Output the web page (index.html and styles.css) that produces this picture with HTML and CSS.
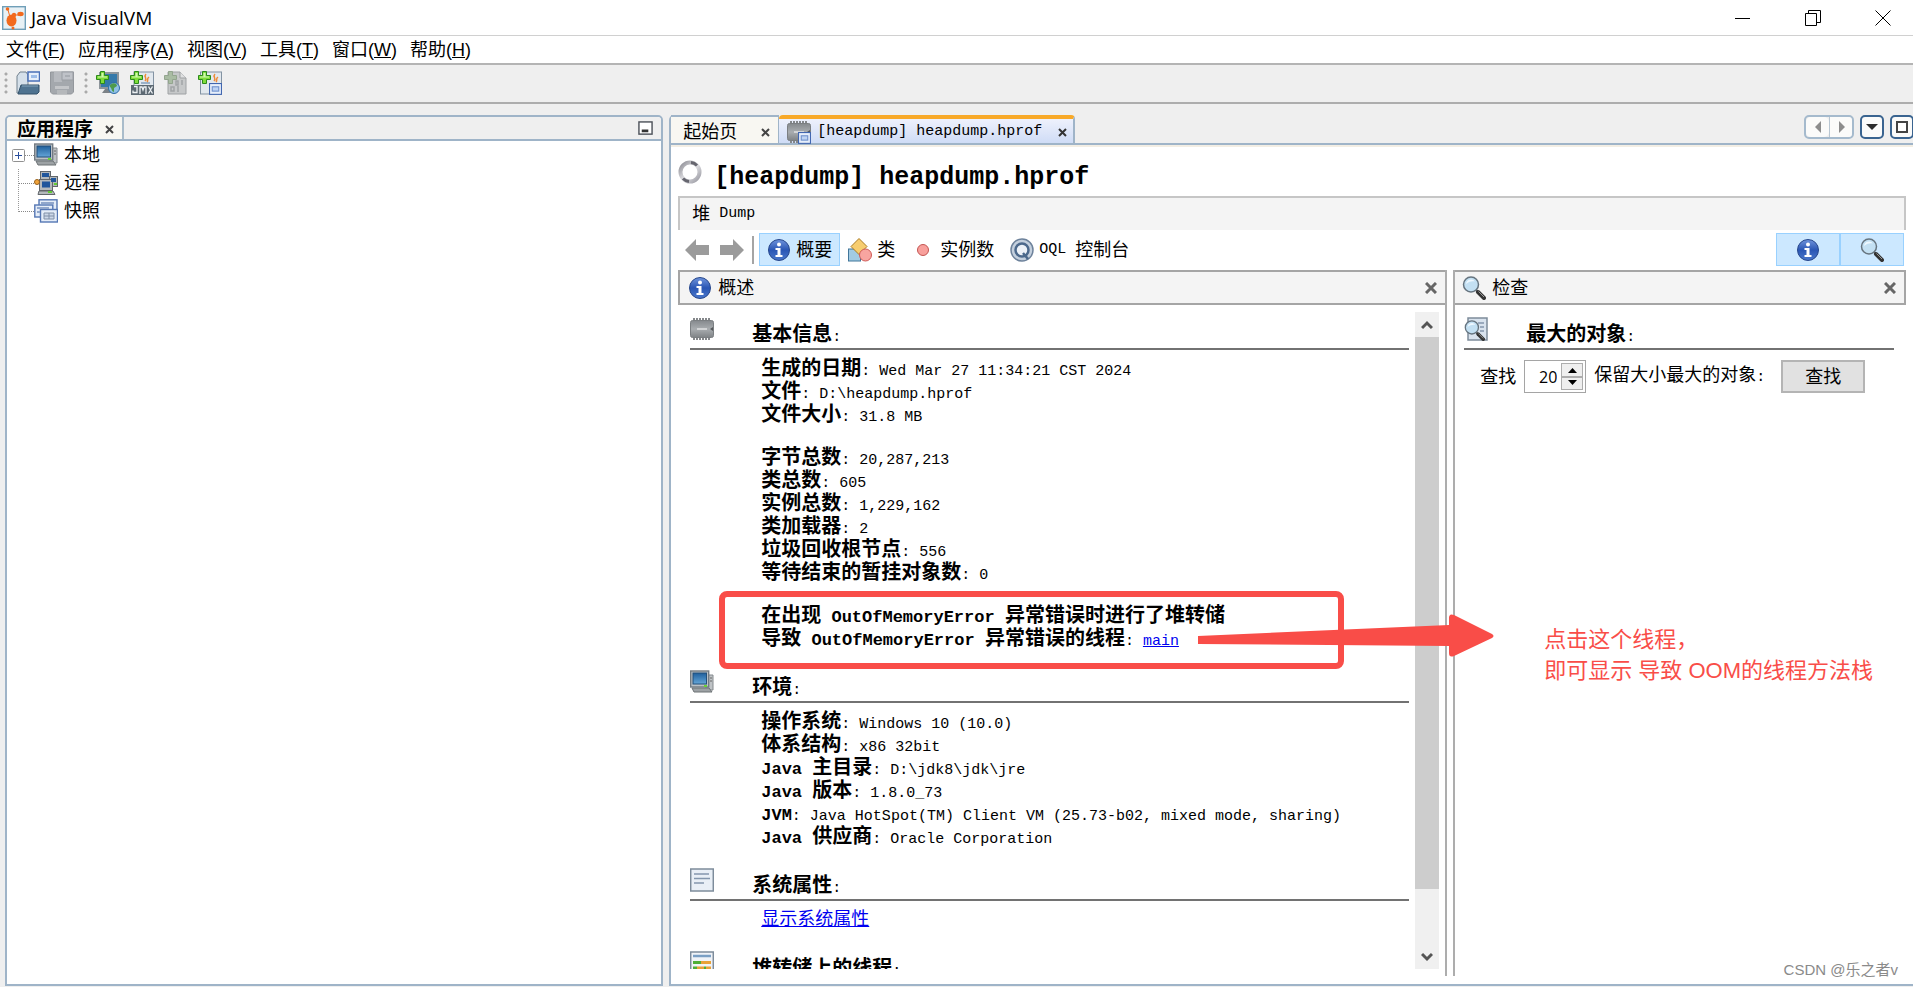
FILE: index.html
```html
<!DOCTYPE html>
<html lang="zh-CN">
<head>
<meta charset="utf-8">
<title>Java VisualVM</title>
<link rel="stylesheet" href="styles.css">
</head>
<body>
<svg class="defs" aria-hidden="true">
  <defs>
    <linearGradient id="g-info" x1="0" y1="0" x2="0" y2="1"><stop offset="0" stop-color="#6f94dc"/><stop offset=".5" stop-color="#2a56b4"/><stop offset="1" stop-color="#4a78cc"/></linearGradient>
    <linearGradient id="g-screen" x1="0" y1="0" x2="0" y2="1"><stop offset="0" stop-color="#1f5f9c"/><stop offset="1" stop-color="#65a6d8"/></linearGradient>
    <linearGradient id="g-chip" x1="0" y1="0" x2="0" y2="1"><stop offset="0" stop-color="#85898d"/><stop offset=".5" stop-color="#a9adb0"/><stop offset="1" stop-color="#7f8386"/></linearGradient>
    <linearGradient id="g-ring" x1="0" y1="0" x2="1" y2="1"><stop offset="0" stop-color="#8d8d94"/><stop offset=".5" stop-color="#e0e0e4"/><stop offset="1" stop-color="#9a9aa2"/></linearGradient>
  </defs>
  <symbol id="i-plus" viewBox="0 0 24 24"><path d="M4.500 .5h4v4h4v4h-4v4h-4v-4h-4v-4h4z" fill="#7edc3a" stroke="#2d8a1c"/><path d="M5.500 2h2v3.500h3.500v1h-9v-1h3.500z" fill="#d2f7b0"/></symbol>
  <symbol id="i-info" viewBox="0 0 24 24"><circle cx="12" cy="12" r="10.500" fill="url(#g-info)" stroke="#27478c"/><circle cx="12" cy="6.500" r="2" fill="#fff"/><path d="M8.500 10h5v7h2v2h-7v-2h2v-5h-2z" fill="#fff"/></symbol>
  <symbol id="i-mag" viewBox="0 0 24 24"><path d="M14 14l2 2" stroke="#555" stroke-width="2"/><path d="M16 16l6 6" stroke="#333" stroke-width="4" stroke-linecap="round"/><path d="M16.500 15.500l5.500 5.500" stroke="#999"/><circle cx="9" cy="8.500" r="7.500" fill="#c3e0f3" stroke="#66747f" stroke-width="1.500"/><path d="M4 8a5 5 0 0 1 9-2.500c-3-.5-6 0-9 2.500z" fill="#eef8ff"/></symbol>
  <symbol id="i-chip" viewBox="0 0 24 24"><path d="M3 2.500h18M3 21.500h18" stroke="#85888b" stroke-width="3" stroke-dasharray="2 1"/><rect x=".5" y="3.500" width="23" height="17" rx="2" fill="url(#g-chip)" stroke="#7b7f82"/><path d="M7 12h10" stroke="#e0e2e3" stroke-width="1.500"/><path d="M23 10v4l-3-2z" fill="#54585b"/></symbol>
  <symbol id="i-pc" viewBox="0 0 24 24"><path d="M16 5h7v15h-7z" fill="#bfc3c6" stroke="#858a8e"/><path d="M20 8h2M20 11h2" stroke="#666"/><path d="M2 18h17l3 4H4z" fill="#9da2a5" stroke="#6d7275"/><rect x=".7" y="1" width="18" height="16" fill="#bbc1c6" stroke="#737b82" stroke-width="1.400"/><rect x="3" y="3" width="13.500" height="11" fill="url(#g-screen)" stroke="#234f79"/><path d="M14 15h3v2h-3z" fill="#69d435"/></symbol>
  <symbol id="i-remote" viewBox="0 0 24 24"><g fill="#b4b9bc" stroke="#62676b"><rect x="6.500" y=".5" width="10" height="9"/><rect x="15.500" y="5.500" width="8" height="10"/><rect x="5.500" y="8.500" width="13" height="11"/><path d="M5 20h14l2 3.500H4z"/></g><path d="M8 2h7v4H8zM17 7h5v4h-5zM8 10.500h8v6H8z" fill="#20569c"/><path d="M14 20h4v2h-4zM20 12h3v2h-3z" fill="#62cc33"/><circle cx="3" cy="11" r="2.500" fill="#f0a33a" stroke="#99611c"/></symbol>
  <symbol id="i-snaps" viewBox="0 0 24 24"><g fill="#e5edf8" stroke="#5577b4" stroke-width="1.400"><rect x="5" y=".8" width="18" height="12"/><rect x=".8" y="6" width="18" height="12"/><rect x="6.500" y="10.500" width="17" height="12.500"/></g><path d="M7 4h13M3 9h12M3 13h3" stroke="#91a7cc" stroke-width="2"/><path d="M10 14h10v6H10zM15 14v6M10 17h10" fill="#cdd8e8" stroke="#8090a8"/></symbol>
  <symbol id="i-snap" viewBox="0 0 24 24"><rect x="1" y="1" width="22" height="20" fill="#e7effb" stroke="#4267b0" stroke-width="2"/><rect x="6" y="7" width="12" height="8" fill="#bed3f3" stroke="#6d8fcc" stroke-width="2"/></symbol>
  <symbol id="i-page" viewBox="0 0 24 24"><rect x=".7" y="1" width="22.600" height="22" fill="#e9eff6" stroke="#7d8c9b" stroke-width="1.500"/><path d="M4 6h15M4 10.500h16M4 15h10" stroke="#8496ad" stroke-width="1.500"/></symbol>
  <symbol id="i-threads" viewBox="0 0 24 24"><rect x=".7" y="1" width="22.600" height="22" fill="#f0f3f7" stroke="#7d8c9b" stroke-width="1.500"/><path d="M3 5h18" stroke="#7a9fc4" stroke-width="2.500"/><path d="M3 11.500h8M3 17h4M14 17h2" stroke="#4fae37" stroke-width="3"/><path d="M11 11.500h10M7 17h7M16 17h5" stroke="#e9a237" stroke-width="3"/></symbol>
</svg>

<header class="titlebar">
  <svg class="app-icon" viewBox="0 0 24 24"><rect x=".7" y=".7" width="22.600" height="22.600" fill="#e8f1f5" stroke="#6f9fb8" stroke-width="1.400"/><ellipse cx="9.500" cy="14.500" rx="5" ry="6" fill="#f26a1e"/><circle cx="12" cy="9" r="2.200" fill="#f26a1e"/><ellipse cx="18.500" cy="8" rx="3.200" ry="2.200" fill="#f26a1e"/><circle cx="5.500" cy="3" r="1.800" fill="#f26a1e"/><path d="M12 9h6M6 4l2 7" stroke="#f26a1e"/><circle cx="11" cy="22" r="1.500" fill="#f26a1e"/></svg>
  <h1 class="app-name">Java VisualVM</h1>
  <div class="win-controls">
    <button type="button" aria-label="最小化"><svg viewBox="0 0 16 16"><path d="M0 8.500h15" stroke="#000"/></svg></button>
    <button type="button" aria-label="还原"><svg viewBox="0 0 16 16"><path d="M.5 3.500h11v12H.5zM3.500 3V.5h12v12H12" fill="none" stroke="#000"/></svg></button>
    <button type="button" aria-label="关闭"><svg viewBox="0 0 16 16"><path d="M.5.5l15 15M15.500.5l-15 15" stroke="#000"/></svg></button>
  </div>
</header>

<nav class="menubar">
  <button type="button">文件(<u>F</u>)</button>
  <button type="button">应用程序(<u>A</u>)</button>
  <button type="button">视图(<u>V</u>)</button>
  <button type="button">工具(<u>T</u>)</button>
  <button type="button">窗口(<u>W</u>)</button>
  <button type="button">帮助(<u>H</u>)</button>
</nav>

<div class="toolbar">
  <span class="grip"></span>
  <button type="button" aria-label="装入"><svg viewBox="0 0 24 24"><path d="M1 22V5l3-4h6l2 3v18z" fill="#d5e0ea" stroke="#71808d"/><rect x="12" y="1" width="11.500" height="9" fill="#e7effb" stroke="#4a70b8" stroke-width="1.500"/><rect x="15" y="4" width="6" height="3" fill="#9dbce8"/><path d="M5 14h18v7l-2 2H2z" fill="#4f7390" stroke="#35536b"/><path d="M6 15h16" stroke="#86a5bc"/></svg></button>
  <button type="button" aria-label="另存为" disabled><svg viewBox="0 0 24 24"><path d="M.5 1h23v20l-2 2h-19l-2-2z" fill="#a4a8ad" stroke="#93979c"/><path d="M4 1h8v10H4z" fill="#b7babf"/><rect x="12" y="1" width="11" height="8" fill="#bfc2c8" stroke="#9a9ea4"/><path d="M15 4h5v2h-5z" fill="#a9adb3"/><path d="M5 15h14v3H5z" fill="#c4c6c9"/><path d="M7 19h10v4H7z" fill="#b5b8bb"/></svg></button>
  <span class="grip"></span>
  <button type="button" aria-label="添加远程主机"><svg viewBox="0 0 24 24"><rect x="4" y="2" width="18" height="15" fill="#3479aa" stroke="#8d959b" stroke-width="2"/><path d="M9 18h7l1 4H6z" fill="#7c8287"/><circle cx="18" cy="17" r="5.500" fill="#8fc0e4" stroke="#2d6ca8"/><path d="M14 14c3-3 7-2 7 1l-3 2v4c-3-1-2-4-4-5z" fill="#4e9a4c"/><use href="#i-plus" width="24" height="24"/></svg></button>
  <button type="button" aria-label="添加 JMX 连接"><svg viewBox="0 0 24 24"><rect x="4" y="1" width="19.500" height="22" fill="#e2e8ee" stroke="#8393a3"/><path d="M16 3c-3 3 2 4-1 7M19 6c-3 2 0 3-2 5" fill="none" stroke="#ee8b38" stroke-width="1.500"/><path d="M11 12h9" stroke="#557ba6"/><path d="M1 14h23v10H1z" fill="#5d6973"/><path d="M4 15.500h3v6H3v-2M10 23v-7h2l1 3 1-3h2v7M18.500 15.500l4 7M22.500 15.500l-4 7" fill="none" stroke="#eef2f5" stroke-width="1.300"/><use href="#i-plus" width="24" height="24"/></svg></button>
  <button type="button" aria-label="添加核心 Dump" disabled><svg viewBox="0 0 24 24"><path d="M4 1h12l6 6v16H4z" fill="#c6c8c9" stroke="#9fa2a4"/><path d="M16 1v6h6" fill="#dfe0e1" stroke="#9fa2a4"/><path d="M12 10h2v4h-2zM18 9v5M7 16h3v4H7zM14 15v6" fill="none" stroke="#a1a4a6" stroke-width="1.500"/><path d="M4.500 .5h4v4h4v4h-4v4h-4v-4h-4v-4h4z" fill="#a9bca3" stroke="#93a58e"/></svg></button>
  <button type="button" aria-label="添加快照"><svg viewBox="0 0 24 24"><rect x="2.500" y="1" width="21" height="22" fill="#e2e8ee" stroke="#8393a3"/><path d="M17 3c-3 3 2 4-1 7M20 6c-3 2 0 3-2 5" fill="none" stroke="#ee8b38" stroke-width="1.500"/><use href="#i-snap" x="11" y="12" width="13" height="13"/><use href="#i-plus" width="24" height="24"/></svg></button>
</div>

<main class="workspace">
  <section class="dock">
    <div class="dock-tabs">
      <div class="dock-tab"><h2>应用程序</h2><button class="tab-x" type="button" aria-label="关闭"><svg viewBox="0 0 9 9"><path d="M1 1l7 7M8 1L1 8" stroke="#444" stroke-width="2"/></svg></button></div>
      <button class="dock-min" type="button" aria-label="最小化窗口"><svg viewBox="0 0 16 16"><rect x="1" y="1" width="14" height="13" fill="#fff" stroke="#4b5058" stroke-width="1.500"/><path d="M4 10.500h7" stroke="#333" stroke-width="3"/></svg></button>
    </div>
    <ul class="tree">
      <li><button class="expander" type="button" aria-label="展开"><svg viewBox="0 0 13 13"><rect x=".5" y=".5" width="12" height="12" rx="1" fill="#fff" stroke="#919191"/><path d="M3 6.500h7M6.500 3v7" stroke="#2b4f9e"/></svg></button><span class="branch"></span><svg class="ico"><use href="#i-pc"/></svg><span>本地</span></li>
      <li><span class="stem"></span><span class="branch"></span><svg class="ico"><use href="#i-remote"/></svg><span>远程</span></li>
      <li><span class="stem last"></span><span class="branch"></span><svg class="ico"><use href="#i-snaps"/></svg><span>快照</span></li>
    </ul>
  </section>

  <section class="editor">
    <div class="tabs">
      <div class="tab"><span>起始页</span><button class="tab-x" type="button" aria-label="关闭"><svg viewBox="0 0 9 9"><path d="M1 1l7 7M8 1L1 8" stroke="#444" stroke-width="2"/></svg></button></div>
      <div class="tab active"><svg class="ico" viewBox="0 0 24 24"><use href="#i-chip" width="24" height="24"/><use href="#i-snap" x="11" y="12" width="13" height="13"/></svg><span class="mono">[heapdump] heapdump.hprof</span><button class="tab-x" type="button" aria-label="关闭"><svg viewBox="0 0 9 9"><path d="M1 1l7 7M8 1L1 8" stroke="#333" stroke-width="2"/></svg></button></div>
      <div class="tab-tools">
        <div class="pair"><button type="button" aria-label="向左滚动"><svg viewBox="0 0 14 14"><path d="M10 1v12L4 7z" fill="#8d8d8d"/></svg></button><button type="button" aria-label="向右滚动"><svg viewBox="0 0 14 14"><path d="M5 1v12l6-6z" fill="#8d8d8d"/></svg></button></div>
        <button class="strong" type="button" aria-label="显示打开的文档列表"><svg viewBox="0 0 14 14"><path d="M1 4h12L7 10z" fill="#2c2c2c"/></svg></button>
        <button class="strong" type="button" aria-label="最大化窗口"><svg viewBox="0 0 14 14"><rect x="2" y="2" width="10" height="10" fill="#fff" stroke="#444" stroke-width="2"/></svg></button>
      </div>
    </div>

    <div class="doc">
      <div class="doc-head">
        <svg class="ico" viewBox="0 0 24 24"><circle cx="12" cy="12" r="9.500" fill="none" stroke="url(#g-ring)" stroke-width="4"/><path d="M13 2.500a9.500 9.500 0 0 1 6 3M11 21.500a9.500 9.500 0 0 1-6-3" fill="none" stroke="#66666f" stroke-width="3"/></svg>
        <h2>[heapdump] heapdump.hprof</h2>
      </div>
      <div class="subbar">堆<span class="mono">Dump</span></div>
      <div class="viewbar">
        <button class="nav" type="button" aria-label="后退"><svg class="ico" viewBox="0 0 24 24"><path d="M0 12L11 1v6h13v10H11v6z" fill="#9b9b9b"/></svg></button>
        <button class="nav" type="button" aria-label="前进"><svg class="ico" viewBox="0 0 24 24"><path d="M24 12L13 1v6H0v10h13v6z" fill="#9b9b9b"/></svg></button>
        <span class="sep"></span>
        <button class="view on" type="button"><svg class="ico"><use href="#i-info"/></svg>概要</button>
        <button class="view" type="button"><svg class="ico" viewBox="0 0 24 24"><rect x=".5" y="11" width="12" height="12" fill="#a2cbe3" stroke="#41769a"/><path d="M11 .5l8 8-8 8-8-8z" fill="#f7cd6f" stroke="#a97b22"/><circle cx="17.500" cy="17" r="6" fill="#f8a5a0" stroke="#cf5a56"/></svg>类</button>
        <button class="view" type="button"><svg class="ico" viewBox="0 0 24 24"><circle cx="12" cy="12" r="5.500" fill="#f8a09c" stroke="#c35451"/></svg>实例数</button>
        <button class="view" type="button"><svg class="ico" viewBox="0 0 24 24"><circle cx="12" cy="12" r="11" fill="#c4d0de" stroke="#6d829b" stroke-width="1.500"/><circle cx="12" cy="12" r="6.500" fill="#edf2f8" stroke="#4c698c" stroke-width="2.500"/><path d="M13 15l5 6" stroke="#4c698c" stroke-width="2.500"/></svg><span class="mono">OQL</span><span class="after">控制台</span></button>
        <div class="toggles">
          <button type="button" aria-label="显示概述"><svg class="ico"><use href="#i-info"/></svg></button>
          <button type="button" aria-label="显示检查"><svg class="ico"><use href="#i-mag"/></svg></button>
        </div>
      </div>

      <div class="panes">
        <section class="pane overview">
          <div class="pane-head"><svg class="ico"><use href="#i-info"/></svg><h3>概述</h3><button type="button" aria-label="关闭"><svg viewBox="0 0 12 12"><path d="M1 1l10 10M11 1L1 11" stroke="#666" stroke-width="3"/></svg></button></div>
          <div class="scroller">
            <div class="content">
              <section class="block">
                <div class="block-head"><svg class="ico"><use href="#i-chip"/></svg><h4>基本信息<i>:</i></h4></div>
                <div class="rows">
                  <p><b>生成的日期</b>: Wed Mar 27 11:34:21 CST 2024</p>
                  <p><b>文件</b>: D:\heapdump.hprof</p>
                  <p><b>文件大小</b>: 31.8 MB</p>
                  <p class="blank"></p>
                  <p><b>字节总数</b>: 20,287,213</p>
                  <p><b>类总数</b>: 605</p>
                  <p><b>实例总数</b>: 1,229,162</p>
                  <p><b>类加载器</b>: 2</p>
                  <p><b>垃圾回收根节点</b>: 556</p>
                  <p><b>等待结束的暂挂对象数</b>: 0</p>
                  <p class="blank"></p>
                  <p><b>在出现<em> OutOfMemoryError </em>异常错误时进行了堆转储</b></p>
                  <p><b>导致<em> OutOfMemoryError </em>异常错误的线程</b>: <a href="#main">main</a></p>
                </div>
              </section>
              <section class="block">
                <div class="block-head"><svg class="ico"><use href="#i-pc"/></svg><h4>环境<i>:</i></h4></div>
                <div class="rows">
                  <p><b>操作系统</b>: Windows 10 (10.0)</p>
                  <p><b>体系结构</b>: x86 32bit</p>
                  <p><b><em>Java </em>主目录</b>: D:\jdk8\jdk\jre</p>
                  <p><b><em>Java </em>版本</b>: 1.8.0_73</p>
                  <p><b><em>JVM</em></b>: Java HotSpot(TM) Client VM (25.73-b02, mixed mode, sharing)</p>
                  <p><b><em>Java </em>供应商</b>: Oracle Corporation</p>
                </div>
              </section>
              <section class="block">
                <div class="block-head"><svg class="ico"><use href="#i-page"/></svg><h4>系统属性<i>:</i></h4></div>
                <div class="rows"><p><a class="cjk" href="#props">显示系统属性</a></p></div>
              </section>
              <section class="block">
                <div class="block-head"><svg class="ico"><use href="#i-threads"/></svg><h4>堆转储上的线程<i>:</i></h4></div>
              </section>
            </div>
            <div class="scrollbar">
              <button type="button" aria-label="向上"><svg viewBox="0 0 12 12"><path d="M1 9l5-5 5 5" fill="none" stroke="#555" stroke-width="3"/></svg></button>
              <div class="track"><div class="thumb"></div></div>
              <button type="button" aria-label="向下"><svg viewBox="0 0 12 12"><path d="M1 3l5 5 5-5" fill="none" stroke="#555" stroke-width="3"/></svg></button>
            </div>
          </div>
        </section>

        <section class="pane inspect">
          <div class="pane-head"><svg class="ico"><use href="#i-mag"/></svg><h3>检查</h3><button type="button" aria-label="关闭"><svg viewBox="0 0 12 12"><path d="M1 1l10 10M11 1L1 11" stroke="#666" stroke-width="3"/></svg></button></div>
          <div class="content">
            <section class="block">
              <div class="block-head"><svg class="ico" viewBox="0 0 24 24"><path d="M4 1h19v22H4z" fill="#d9e3ee" stroke="#7d8c9b" stroke-width="1.500"/><path d="M14 6h6M16 10h4M16 14h4" stroke="#8496ad" stroke-width="1.500"/><use href="#i-mag" x="0" y="3" width="21" height="21"/></svg><h4>最大的对象<i>:</i></h4></div>
              <form class="find">
                <label for="count">查找</label>
                <span class="spinner"><input id="count" type="text" value="20"><span class="steps"><button type="button" aria-label="增加"><svg viewBox="0 0 9 6"><path d="M0 6l4.500-5L9 6z"/></svg></button><button type="button" aria-label="减少"><svg viewBox="0 0 9 6"><path d="M0 0l4.500 5L9 0z"/></svg></button></span></span>
                <label for="count">保留大小最大的对象<i>:</i></label>
                <button class="go" type="button">查找</button>
              </form>
            </section>
          </div>
        </section>

        <div class="mark-box"></div>
        <svg class="mark-arrow" viewBox="0 0 296 44"><path d="M0 22L251 11V4q0-5 5-3l38 19q3 2 0 4l-38 18q-5 2-5-3v-7L0 30z" fill="#f94d48"/></svg>
        <p class="mark-text">点击这个线程，<br>即可显示 导致 OOM的线程方法栈</p>
      </div>
    </div>
  </section>
</main>
<div class="watermark">CSDN @乐之者v</div>
</body>
</html>
```

FILE: styles.css
```css
* { box-sizing: border-box; }

body {
  margin: 0;
  height: 100vh;
  display: flex;
  flex-direction: column;
  overflow: hidden;
  position: relative;
  background: #efefef;
  color: #000;
  font: 18px/24px "Liberation Sans", "Noto Sans CJK SC", sans-serif;
}

h1, h2, h3, h4, p, ul { margin: 0; padding: 0; font: inherit; }
i, em { font-style: normal; }
button { border: 0; padding: 0; background: none; font: inherit; color: inherit; display: inline-flex; align-items: center; justify-content: center; }
svg { display: block; flex: none; }
a { color: #0000f0; }

.defs { position: absolute; width: 0; height: 0; }
.ico { width: 24px; height: 24px; }
.mono, i { font-family: "Liberation Mono", monospace; font-size: 15px; font-weight: 400; }

/* Window frame */
.titlebar { flex: none; height: 36px; display: flex; align-items: center; padding-left: 2px; background: #fff; border-bottom: 1px solid #d0d0d0; }
.app-icon { width: 24px; height: 24px; }
.app-name { margin-left: 5px; font-family: "Open Sans", sans-serif; font-size: 19px; }
.win-controls { margin: 0 -5px 0 auto; display: flex; height: 32px; }
.win-controls button { width: 70px; }
.win-controls svg { width: 16px; height: 16px; }

.menubar { flex: none; height: 29px; display: flex; gap: 13px; padding-left: 6px; background: #fff; border-bottom: 2px solid #b4b4b4; }

.toolbar { flex: none; height: 39px; display: flex; align-items: center; gap: 10px; padding: 0 0 2px 4px; border-bottom: 2px solid #adadad; }
.toolbar svg { width: 24px; height: 24px; }
.grip { width: 4px; height: 24px; margin-right: -2px; background: radial-gradient(circle, #aaa 1px, transparent 2px) 0 0 / 4px 6px; }

.workspace { flex: 1; min-height: 0; display: flex; gap: 6px; padding: 11px 0 1px 5px; }

/* Applications dock */
.dock { flex: none; width: 34.5%; display: flex; flex-direction: column; background: #fff; border: 2px solid #9fb4c8; border-radius: 5px 5px 0 0; }
.dock-tabs { height: 24px; display: flex; justify-content: space-between; align-items: center; background: #efefef; border-bottom: 2px solid #9fb4c8; border-radius: 4px 4px 0 0; overflow: hidden; }
.dock-tab { display: flex; gap: 12px; padding: 2px 8px 0 10px; background: #f8f7f2; border-right: 2px solid #a9bccb; }
.dock-tab h2 { font-size: 19px; font-weight: 700; padding-top: 2px; }
.tab-x svg { width: 9px; height: 9px; }
.dock-min { margin-right: 8px; }
.dock-min svg { width: 15px; height: 15px; }

.tree { list-style: none; padding-left: 5px; }
.tree li { height: 28px; display: flex; align-items: center; }
.tree .ico { margin-right: 6px; }
.expander, .stem { flex: none; width: 13px; }
.expander svg { width: 13px; height: 13px; }
.stem { align-self: stretch; background: linear-gradient(#999, #999) 6px 0 / 1px 100% no-repeat; -webkit-mask: repeating-linear-gradient(#000 0 1px, transparent 1px 2px); }
.stem.last { align-self: flex-start; height: 15px; }
.branch { width: 15px; border-top: 1px dotted #888; }
.expander + .branch { width: 9px; }
.stem + .branch { margin-left: -6px; }

/* Document area */
.editor { flex: 1; min-width: 0; display: flex; flex-direction: column; border-left: 2px solid #9fb4c8; border-bottom: 2px solid #9fb4c8; border-top-left-radius: 5px; background: #fff; }
.tabs { flex: none; height: 30px; display: flex; background: #efefef; border-bottom: 2px solid #9fb4c8; }
.tab { display: flex; align-items: center; padding: 4px 8px 0 12px; background: #f8f7f2; border: 1px solid #9fb4c8; border-width: 2px 1px 0 0; gap: 24px; }
.tab.active { gap: 6px; padding: 2px 6px 0 8px; background: linear-gradient(#eef1fc, #cfdcf6); border: 1px solid #9fb4c8; border-width: 4px 2px 0 0; border-top-color: #f8a928; border-radius: 4px 4px 0 0; }
.tab.active .tab-x { margin-left: 10px; }
.tab-tools { margin: 0 -1px 0 auto; display: flex; align-items: center; gap: 6px; height: 24px; }
.tab-tools button { width: 24px; height: 24px; background: #fbfbfa; border-radius: 5px; }
.tab-tools svg { width: 14px; height: 14px; }
.pair { display: flex; border: 2px solid #a5bacd; border-radius: 5px; }
.tab-tools .pair button { width: 23px; height: 20px; }
.tab-tools .pair button + button { border-left: 1px solid #b8c6d2; border-radius: 0 4px 4px 0; }
.tab-tools .strong { border: 2px solid #3a6490; }

.doc { flex: 1; min-height: 0; display: flex; flex-direction: column; padding: 0 7px 8px 7px; border-top: 2px solid #f3eee4; }
.doc-head { flex: none; height: 49px; display: flex; align-items: center; gap: 12px; }
.doc-head .ico { align-self: flex-start; margin-top: 13px; }
.doc-head h2 { font: bold 25px/32px "Liberation Mono", monospace; margin-top: 12px; }
.subbar { flex: none; height: 34px; display: flex; align-items: center; gap: 9px; padding: 0 12px; background: #f4f4f4; border: 2px solid #c6c6c6; border-bottom: 0; }

.viewbar { flex: none; height: 40px; display: flex; align-items: center; padding: 0 2px 1px 7px; }
.nav { margin-right: 11px; }
.sep { width: 2px; height: 28px; margin: 0 5px 0 -3px; background: #a5a5a5; }
.view { height: 33px; gap: 5px; padding: 0 8px; }
.view.on { padding: 0 7px; background: #cce8ff; border: 1px solid #99d1ff; }
.view .after { margin-left: 4px; }
.toggles { margin-left: auto; display: flex; }
.toggles button { width: 64px; height: 33px; background: #cce8ff; border: 1px solid #99d1ff; }

.panes { flex: 1; min-height: 0; position: relative; display: grid; grid-template-columns: 768fr 452fr; gap: 6px; }
.pane { min-width: 0; min-height: 0; display: flex; flex-direction: column; }
.overview { border-right: 2px solid #adadad; }
.inspect { border-left: 2px solid #adadad; }
.pane-head { flex: none; height: 35px; display: flex; align-items: center; gap: 6px; padding: 0 8px; background: #f4f4f4; border: 2px solid #a5a5a5; }
.overview .pane-head { border-right: 0; }
.inspect .pane-head { border-left: 0; padding-left: 7px; }
.pane-head button { margin-left: auto; }
.pane-head button svg { width: 12px; height: 12px; }

.scroller { flex: 1; min-height: 0; display: flex; padding: 7px 6px 7px 0; }
.content { flex: 1; min-width: 0; overflow: hidden; padding: 4px 6px 0 12px; }
.inspect .content { padding: 11px 12px 0 9px; }
.block { margin-bottom: 21px; }
.block-head { display: flex; gap: 38px; border-bottom: 2px solid #727272; }
.block-head .ico { margin-top: 1px; }
.block-head h4 { padding-top: 8px; line-height: 21px; font-size: 20px; font-weight: 700; white-space: nowrap; }
.rows { padding: 5px 0 0 71px; font: 15px/23px "Liberation Mono", monospace; white-space: nowrap; }
.rows p { height: 23px; }
.rows .blank { height: 20px; }
.rows b { font: bold 20px/23px "Noto Sans CJK SC", sans-serif; }
.rows em { font: bold 17px/23px "Liberation Mono", monospace; white-space: pre; }
.rows .cjk { font: 18px/23px "Noto Sans CJK SC", sans-serif; }

.scrollbar { flex: none; width: 24px; display: flex; flex-direction: column; background: #f0f0f0; }
.scrollbar button { height: 25px; }
.scrollbar button svg { width: 12px; height: 12px; }
.track { flex: 1; }
.thumb { height: 91%; background: #cdcdcd; }

.find { display: flex; align-items: center; padding: 10px 0 0 16px; white-space: nowrap; }
.spinner { width: 62px; height: 33px; margin: 0 8px; display: flex; padding: 2px; background: #fff; border: 1px solid #a5a5a5; }
.spinner input { flex: 1; min-width: 0; border: 0; padding: 0 4px 0 0; text-align: right; background: none; font: 16px "Open Sans", sans-serif; }
.steps { width: 22px; display: flex; flex-direction: column; }
.steps button { flex: 1; background: #efefef; border: 1px solid #adadad; }
.steps svg { width: 9px; height: 6px; }
.go { width: 84px; height: 33px; margin-left: 16px; background: #e1e1e1; border: 2px solid #b4b4b4; }

/* Annotations over the panes */
.mark-box { position: absolute; left: 41px; top: 321px; width: 625px; height: 78px; border: 6px solid #f94d48; border-radius: 8px; }
.mark-arrow { position: absolute; left: 520px; top: 344px; width: 296px; height: 44px; }
.mark-text { position: absolute; left: 866px; top: 354px; color: #f94d48; font-size: 22px; line-height: 31px; white-space: nowrap; }
.watermark { position: absolute; right: 15px; bottom: 5px; color: #8a8a8a; font-size: 15px; }
```
